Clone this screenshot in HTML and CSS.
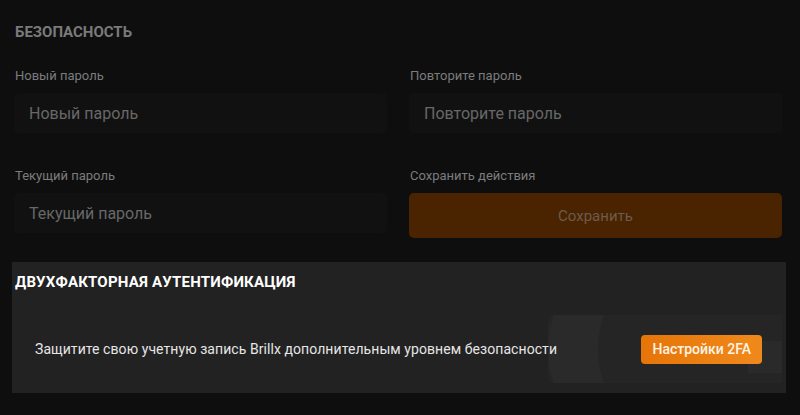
FILE: index.html
```html
<!DOCTYPE html>
<html lang="ru">

<head>
    <meta charset="UTF-8">
    <title>Безопасность</title>
    <link rel="stylesheet" href="styles.css">
</head>

<body>
    <section class="security">
        <h2 class="section-title">Безопасность</h2>
        <div class="form-grid">
            <div class="field">
                <label>Новый пароль</label>
                <input type="password" placeholder="Новый пароль">
            </div>
            <div class="field">
                <label>Повторите пароль</label>
                <input type="password" placeholder="Повторите пароль">
            </div>
            <div class="field">
                <label>Текущий пароль</label>
                <input type="password" placeholder="Текущий пароль">
            </div>
            <div class="field">
                <label>Сохранить действия</label>
                <button class="save-btn" disabled>Сохранить</button>
            </div>
        </div>
    </section>

    <section class="twofa">
        <h2 class="twofa-title">Двухфакторная аутентификация</h2>
        <div class="twofa-row">
            <!-- водяной знак за кнопкой -->
            <svg class="twofa-bg" width="234" height="68" viewBox="0 0 234 68">
                <rect x="0" y="0" width="234" height="68" rx="6" fill="#262626" />
                <circle cx="100" cy="34" r="100" fill="#2a2a2a" />
                <circle cx="150" cy="34" r="100" fill="#252525" />
                <rect x="200" y="26" width="34" height="32" fill="#2a2a2a" />
            </svg>
            <p>Защитите свою учетную запись Brillx дополнительным уровнем безопасности</p>
            <button class="twofa-btn">Настройки 2FA</button>
        </div>
    </section>
</body>

</html>
```

FILE: styles.css
```css
body {
    margin: 0;
    background: #0e0e0e;
    font-family: "Roboto", "Noto Sans", sans-serif;
    color: #8a8a8a;
}

.security {
    padding: 24px 18px 0 14px;
}

.section-title {
    margin: 0 0 27px 1px;
    font-size: 15px;
    line-height: 17px;
    font-weight: 700;
    text-transform: uppercase;
    color: #7a7a7a;
}

.form-grid {
    display: grid;
    grid-template-columns: 1fr 1fr;
    column-gap: 22px;
    row-gap: 35px;
}

.field {
    display: flex;
    flex-direction: column;
}

.field label {
    font-size: 13px;
    color: #7c7c7c;
    margin: 0 0 9px 1px;
    line-height: 16px;
}

.field input {
    height: 40px;
    box-sizing: border-box;
    background: #111;
    border: none;
    border-radius: 4px;
    padding: 0 15px;
    font-family: inherit;
    font-size: 16px;
    color: #ccc;
    outline: none;
}

.field input::placeholder {
    color: #686868;
}

.save-btn {
    height: 45px;
    background: #4a2400;
    border: none;
    border-radius: 5px;
    font-family: inherit;
    font-size: 15px;
    color: #6d5b4c;
}

.twofa {
    margin: 24px 14px 0 12px;
    background: #222;
    padding-bottom: 10px;
}

.twofa-title {
    margin: 0;
    padding: 11px 3px 0;
    font-size: 15px;
    font-weight: 700;
    letter-spacing: 0.2px;
    text-transform: uppercase;
    color: #fff;
    line-height: 18px;
}

.twofa-row {
    position: relative;
    margin-top: 24px;
    height: 68px;
    display: flex;
    align-items: center;
    justify-content: space-between;
    padding: 0 24px 0 23px;
}

.twofa-bg {
    position: absolute;
    right: 4px;
    top: 0;
}

.twofa-row p {
    position: relative;
    margin: 0;
    font-size: 14px;
    letter-spacing: 0.07px;
    white-space: nowrap;
    color: #e6e6e6;
}

.twofa-btn {
    position: relative;
    height: 29px;
    padding: 0 11px;
    background: linear-gradient(90deg, #e67508, #f0891c);
    border: none;
    border-radius: 4px;
    font-family: inherit;
    font-size: 14px;
    font-weight: 500;
    color: #fff4e6;
}
```
